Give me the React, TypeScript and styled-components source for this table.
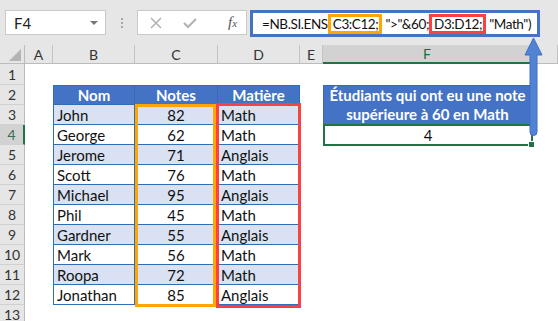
import React from "react";
import styled, { createGlobalStyle } from "styled-components";

const GlobalStyle = createGlobalStyle`
  html, body {
    margin: 0;
    padding: 0;
    background: #fff;
  }
  body {
    font-family: Lato, "Open Sans", sans-serif;
  }
`;

const students = [
  { name: "John", note: 82, subject: "Math" },
  { name: "George", note: 62, subject: "Math" },
  { name: "Jerome", note: 71, subject: "Anglais" },
  { name: "Scott", note: 76, subject: "Math" },
  { name: "Michael", note: 95, subject: "Anglais" },
  { name: "Phil", note: 45, subject: "Math" },
  { name: "Gardner", note: 55, subject: "Anglais" },
  { name: "Mark", note: 56, subject: "Math" },
  { name: "Roopa", note: 72, subject: "Math" },
  { name: "Jonathan", note: 85, subject: "Anglais" },
];

const columns = ["A", "B", "C", "D", "E", "F", ""];
const ACTIVE_COL = "F";
const ACTIVE_ROW = 4;

const Page = styled.div`
  position: relative;
  width: 558px;
  height: 321px;
  overflow: hidden;
  background: #fff;
`;

/* ---------- formula bar ---------- */

const Toolbar = styled.div`
  height: 45px;
  box-sizing: border-box;
  background: #e6e6e6;
  display: flex;
  align-items: flex-start;
  padding: 10px 0 0 5px;
`;

const NameBox = styled.div`
  width: 101px;
  height: 25px;
  box-sizing: border-box;
  background: #fff;
  border: 1px solid #c9c9c9;
  display: flex;
  align-items: center;
  justify-content: space-between;
  padding: 0 7px 0 8px;
  font-size: 15px;
  color: #222;
`;

const Caret = styled.span`
  width: 0;
  height: 0;
  border-left: 4px solid transparent;
  border-right: 4px solid transparent;
  border-top: 4px solid #777;
`;

const Grip = styled.div`
  width: 31px;
  height: 25px;
  display: flex;
  flex-direction: column;
  align-items: center;
  justify-content: center;
  gap: 2px;

  span {
    width: 2px;
    height: 2px;
    background: #a6a6a6;
  }
`;

const FxBox = styled.div`
  width: 110px;
  height: 25px;
  box-sizing: border-box;
  background: #fff;
  border: 1px solid #c9c9c9;
  display: flex;
  align-items: center;
  padding: 0 0 0 12px;
  gap: 21px;
`;

const FxLabel = styled.span`
  font-family: "Liberation Serif", serif;
  font-style: italic;
  font-size: 15px;
  color: #555;
  margin-left: 10px;

  small {
    font-size: 11px;
  }
`;

const FormulaBox = styled.div`
  width: 290px;
  height: 27px;
  margin-left: 3px;
  box-sizing: border-box;
  background: #fff;
  border: 3px solid #4472c4;
  display: flex;
  align-items: center;
  padding-left: 9px;
  font-size: 13.5px;
  letter-spacing: -0.4px;
  color: #111;
  white-space: nowrap;
  overflow: hidden;
`;

const RangeRef = styled.span<{ $color: string }>`
  display: inline-flex;
  align-items: center;
  height: 20px;
  box-sizing: border-box;
  padding: 0 1px 0 2px;
  margin-right: 3px;
  border: 3px solid ${(p) => p.$color};
`;

/* ---------- sheet ---------- */

const Sheet = styled.div`
  display: grid;
  grid-template-columns: 25px 28px 82px 83px 82px 23px 209px 26px;
  grid-template-rows: 19px 21px repeat(12, 20px);
  font-size: 15px;
  color: #111;
`;

const Corner = styled.div`
  grid-row: 1;
  grid-column: 1;
  background: #e6e6e6;
  border-right: 1px solid #bcbcbc;
  border-bottom: 1px solid #bcbcbc;
  position: relative;

  &::after {
    content: "";
    position: absolute;
    right: 3px;
    bottom: 2px;
    border-left: 12px solid transparent;
    border-bottom: 12px solid #b4b4b4;
  }
`;

const ColHead = styled.div<{ $col: number; $active?: boolean }>`
  grid-row: 1;
  grid-column: ${(p) => p.$col};
  background: ${(p) => (p.$active ? "#d2d2d2" : "#e6e6e6")};
  border-right: 1px solid #c3c3c3;
  border-bottom: ${(p) => (p.$active ? "2px solid #217346" : "1px solid #bcbcbc")};
  display: flex;
  align-items: center;
  justify-content: center;
  font-size: 14px;
  color: ${(p) => (p.$active ? "#1d6b40" : "#333")};
`;

const RowHead = styled.div<{ $row: number; $active?: boolean }>`
  grid-column: 1;
  grid-row: ${(p) => p.$row + 1};
  background: ${(p) => (p.$active ? "#d2d2d2" : "#e6e6e6")};
  border-bottom: 1px solid #d0d0d0;
  border-right: ${(p) => (p.$active ? "2px solid #217346" : "1px solid #bcbcbc")};
  display: flex;
  align-items: center;
  justify-content: center;
  font-size: 14px;
  color: ${(p) => (p.$active ? "#3c6b50" : "#333")};
`;

const Cell = styled.div<{
  $row: number;
  $col: number;
  $head?: boolean;
  $band?: boolean;
  $center?: boolean;
}>`
  grid-row: ${(p) => p.$row + 1};
  grid-column: ${(p) => p.$col};
  box-sizing: border-box;
  display: flex;
  align-items: center;
  justify-content: ${(p) => (p.$center || p.$head ? "center" : "flex-start")};
  padding: 0 3px;
  background: ${(p) => (p.$head ? "#4472c4" : p.$band ? "#d9e1f2" : "#fff")};
  color: ${(p) => (p.$head ? "#fff" : "#111")};
  font-weight: ${(p) => (p.$head ? 700 : 400)};
  border-right: 1px solid #2f6eb5;
  border-bottom: 1px solid #2f6eb5;
  border-left: ${(p) => (p.$col === 3 ? "1px solid #2f6eb5" : "none")};
  border-top: ${(p) => (p.$row === 2 ? "1px solid #2f6eb5" : "none")};
`;

const ResultHead = styled.div`
  grid-row: 3 / span 2;
  grid-column: 7;
  background: #4472c4;
  border: 1px solid #3a66b3;
  color: #fff;
  font-weight: 700;
  font-size: 15px;
  line-height: 19px;
  text-align: center;
  display: flex;
  align-items: center;
  justify-content: center;
`;

const ResultCell = styled.div`
  grid-row: 5;
  grid-column: 7;
  position: relative;
  box-sizing: border-box;
  margin: -1px -1px -1px 0;
  border: 2px solid #217346;
  display: flex;
  align-items: center;
  justify-content: center;

  &::after {
    content: "";
    position: absolute;
    right: -4px;
    bottom: -4px;
    width: 5px;
    height: 5px;
    background: #217346;
    border: 1px solid #fff;
  }
`;

const RangeFrame = styled.div<{ $col: number; $color: string; $inset: string }>`
  grid-row: 4 / span 10;
  grid-column: ${(p) => p.$col};
  margin: ${(p) => p.$inset};
  border: 3px solid ${(p) => p.$color};
  z-index: 1;
  pointer-events: none;
`;

const Pointer = styled.svg`
  position: absolute;
  left: 522px;
  top: 36px;
  z-index: 2;
`;

export default function App() {
  return (
    <Page>
      <GlobalStyle />
      <Toolbar>
        <NameBox>
          F4
          <Caret />
        </NameBox>
        <Grip>
          <span />
          <span />
          <span />
        </Grip>
        <FxBox>
          <svg width="12" height="12" viewBox="0 0 12 12">
            <path d="M1 1 L11 11 M11 1 L1 11" stroke="#b3b3b3" strokeWidth="1.6" />
          </svg>
          <svg width="14" height="12" viewBox="0 0 14 12">
            <path d="M1 6 L5 10 L13 2" stroke="#b3b3b3" strokeWidth="2.2" fill="none" />
          </svg>
          <FxLabel>
            f<small>x</small>
          </FxLabel>
        </FxBox>
        <FormulaBox>
          =NB.SI.ENS
          <RangeRef $color="#ffa600">C3:C12;</RangeRef>
          {'">"&60;'}
          <RangeRef $color="#ff4040">D3:D12;</RangeRef>
          {'"Math")'}
        </FormulaBox>
      </Toolbar>

      <Sheet>
        <Corner />
        {columns.map((c, i) => (
          <ColHead key={i} $col={i + 2} $active={c === ACTIVE_COL}>
            {c}
          </ColHead>
        ))}
        {Array.from({ length: 13 }, (_, i) => i + 1).map((r) => (
          <RowHead key={r} $row={r} $active={r === ACTIVE_ROW}>
            {r}
          </RowHead>
        ))}

        <Cell $row={2} $col={3} $head>Nom</Cell>
        <Cell $row={2} $col={4} $head>Notes</Cell>
        <Cell $row={2} $col={5} $head>Matière</Cell>
        {students.map((s, i) => {
          const row = i + 3;
          const band = i % 2 === 0;
          return (
            <React.Fragment key={s.name}>
              <Cell $row={row} $col={3} $band={band}>{s.name}</Cell>
              <Cell $row={row} $col={4} $band={band} $center>{s.note}</Cell>
              <Cell $row={row} $col={5} $band={band}>{s.subject}</Cell>
            </React.Fragment>
          );
        })}

        <RangeFrame $col={4} $color="#ffa600" $inset="-1px 2px -2px 0" />
        <RangeFrame $col={5} $color="#ff4040" $inset="-2px -1px -3px -2px" />

        <ResultHead>
          Étudiants qui ont eu une note
          <br />
          supérieure à 60 en Math
        </ResultHead>
        <ResultCell>4</ResultCell>
      </Sheet>

      <Pointer width="24" height="102" viewBox="0 0 24 102">
        <path
          d="M11.5 2 L20 19 L15 19 L15 96 Q15 99.5 11.5 99.5 Q8 99.5 8 96 L8 19 L3 19 Z"
          fill="#5282d4"
          stroke="#3f6fc2"
          strokeWidth="1"
        />
      </Pointer>
    </Page>
  );
}
